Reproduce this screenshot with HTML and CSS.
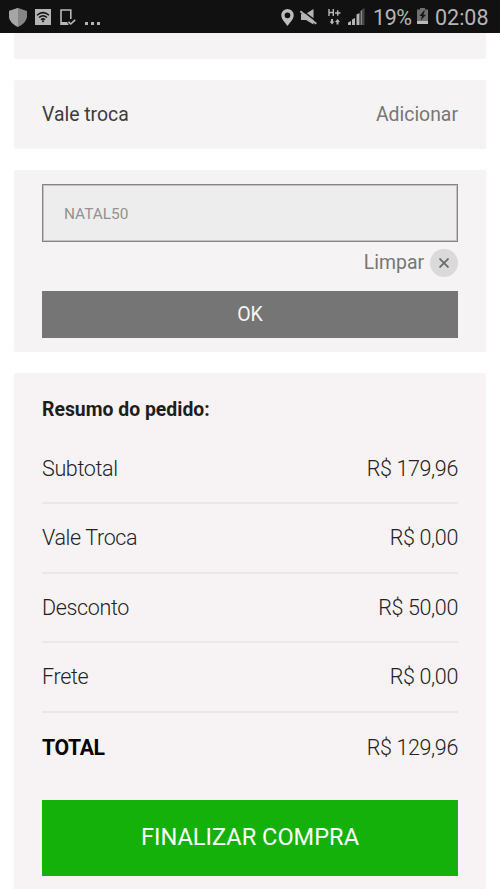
FILE: index.html
```html
<!DOCTYPE html>
<html lang="pt-BR">
<head>
<meta charset="utf-8">
<meta name="viewport" content="width=device-width, initial-scale=1">
<title>Resumo do pedido</title>
<link rel="stylesheet" href="styles.css">
</head>
<body>
<header class="status">
  <div class="status-left">
    <svg class="shield" width="18" height="19" viewBox="0 0 18 19"><path fill="#858585" d="M9 0 18 3V9Q17 15 9 19Q1 15 0 9V3Z"/><path fill="#a6a6a6" d="M9 0V19Q1 15 0 9V3Z"/></svg>
    <svg class="wifi" width="16" height="16" viewBox="0 0 16 16"><path fill="#b5b5b5" d="M0 0H16V16H0Z"/><path fill="none" stroke="#111" stroke-width="1.5" d="M2 6.2Q8 1 14 6.2M4 8.5Q8 5 12 8.5M6 10.7Q8 9 10 10.7"/><circle cx="8" cy="12.2" r="1" fill="#111"/></svg>
    <svg class="phone" width="16" height="17" viewBox="0 0 16 17"><path fill="none" stroke="#b8b8b8" stroke-width="1.6" d="M10.8 10V1H1V15.2H8.5M1 13.7H7.5M8.5 12.8 10.8 15 15.2 10.8"/></svg>
    <span class="dots"><i></i><i></i><i></i></span>
  </div>
  <div class="status-right">
    <svg class="pin" width="13" height="17" viewBox="0 0 13 17"><path fill="#bdbdbd" fill-rule="evenodd" d="M6.5 0A6.2 6.2 0 0 1 12.7 6.2C12.7 10 9.5 12.5 6.5 17C3.5 12.5.3 10 .3 6.2A6.2 6.2 0 0 1 6.5 0M6.5 3.4A2.9 2.9 0 1 0 6.5 9.2A2.9 2.9 0 1 0 6.5 3.4"/></svg>
    <svg class="mute" width="17" height="17" viewBox="0 0 17 17"><path fill="#b5b5b5" d="M1 4.8H6L13.5 0V15.5L6 11H1Z"/><path stroke="#111" stroke-width="1.5" d="M1.5 1 17 12.8"/><path stroke="#b5b5b5" stroke-width="1.8" d="M.3 2.3 16.3 14.8"/></svg>
    <svg class="network" width="13" height="16" viewBox="0 0 13 16"><path fill="none" stroke="#b8b8b8" stroke-width="1.4" d="M1 0V7M5.3 0V7M1 3.5H5.3M7 4H12.5M9.7 1.3V6.7"/><path fill="#b8b8b8" d="M3 10H5V12.5H6.5L4 15.5 1.5 12.5H3ZM8.5 15.5V13H7L9.5 10 12 13H10.5V15.5Z"/></svg>
    <svg class="signal" width="18" height="17" viewBox="0 0 18 17"><path fill="#b5b5b5" d="M1 14.5 4 13V17H1ZM5 11.5 8 10V17H5ZM9.5 6.5 12.5 5V17H9.5Z"/><path fill="#888" d="M13.5 3 15 2V17H13.5Z"/><path fill="#474747" d="M15 1.5 17.5 0V17H15Z"/></svg>
    <span class="percent">19%</span>
    <svg class="battery" width="11" height="16" viewBox="0 0 11 16"><path fill="#707070" d="M0 1.5H3V0H8V1.5H11V13H0Z"/><path fill="#bbb" d="M0 13H11V16H0Z"/><path fill="#151515" d="M7 2.5 2.5 8H5L3.7 12.5 9 6.7H6.3L8 2.5Z"/></svg>
    <time>02:08</time>
  </div>
</header>
<main>
  <div class="card previous"></div>
  <section class="card voucher"><span>Vale troca</span><a class="add">Adicionar</a></section>
  <section class="card coupon">
    <div class="code">NATAL50</div>
    <div class="clear"><span>Limpar</span><b><svg width="10" height="10" viewBox="0 0 10 10"><path d="M.5.5 9.5 9.5M9.5.5.5 9.5" stroke="#686868" stroke-width="1.7"/></svg></b></div>
    <div class="ok"><span>OK</span></div>
  </section>
  <section class="card summary">
    <h2><span>Resumo do pedido:</span></h2>
    <div class="row"><span>Subtotal</span><span>R$ 179,96</span></div>
    <div class="row"><span>Vale Troca</span><span>R$ 0,00</span></div>
    <div class="row"><span>Desconto</span><span>R$ 50,00</span></div>
    <div class="row"><span>Frete</span><span>R$ 0,00</span></div>
    <div class="row"><strong>TOTAL</strong><span>R$ 129,96</span></div>
    <div class="buy"><span>FINALIZAR COMPRA</span></div>
  </section>
</main>
</body>
</html>
```
FILE: styles.css
```css
* { box-sizing: border-box; }
html { overflow: hidden; }
body { margin: 0; height: 889px; overflow: hidden; background: #fff; font-family: Roboto, sans-serif; }
svg { display: block; flex: none; }
.status { height: 33px; background: #111; color: #b5b5b5; display: flex; justify-content: space-between; padding: 0 11px 0 9px; font-size: 21.5px; line-height: 35px; }
.status-left, .status-right { display: flex; align-items: flex-start; }
.shield { margin-top: 8px; }
.wifi { margin: 9px 0 0 8px; }
.phone { margin: 9px 0 0 9px; }
.dots { display: flex; gap: 3px; margin: 22px 0 0 9px; }
.dots i { width: 3px; height: 3px; background: #b5b5b5; }
.pin { margin-top: 9px; }
.mute { margin: 9px 0 0 6px; }
.network { margin: 9px 0 0 11px; }
.signal { margin: 8px 0 0 6px; }
.percent { width: 39px; margin-left: 8px; letter-spacing: -.4px; }
.battery { margin: 8px 0 0 5px; }
time { width: 54px; margin-left: 7px; }
main { padding: 0 14px; }
.card { background: #f6f3f4; border-radius: 2px; padding: 0 28px; }
.previous { height: 26px; border-radius: 0 0 2px 2px; }
.voucher { margin-top: 21px; height: 69px; display: flex; align-items: center; justify-content: space-between; color: #3c3c3c; font-size: 19.4px; }
.add { color: #777; }
.coupon { margin-top: 21px; height: 182px; padding-top: 14px; }
.code { height: 58px; border: 1px solid #858585; box-shadow: inset 0 0 0 1px #c3c2c2; background: #ededed; padding-left: 21px; color: #929292; font-size: 15.4px; line-height: 58px; }
.clear { height: 49px; padding-top: 7px; display: flex; justify-content: flex-end; gap: 6px; color: #777; font-size: 19.4px; line-height: 27px; }
.clear b { width: 28px; height: 28px; border-radius: 50%; background: #dadada; display: grid; place-items: center; }
.ok { height: 47px; background: #757575; color: #f5f5f5; font-size: 19.5px; line-height: 47px; text-align: center; }
.summary { margin-top: 21px; height: 540px; padding-top: 25px; background: #f7f3f5; }
h2 { margin: 0; height: 36.5px; color: #1d1d1d; font-size: 19.4px; font-weight: 700; line-height: 24px; }
.row { height: 69.5px; display: flex; justify-content: space-between; align-items: center; border-bottom: 2px solid #eae7e9; color: #222; font-size: 21.5px; font-weight: 300; letter-spacing: -.36px; }
.row:nth-of-type(5) { border-bottom: 0; }
.row strong { color: #050505; font-size: 21.2px; font-weight: 700; }
.buy { margin-top: 17.5px; height: 76px; background: #14b10b; color: #fff; font-size: 23.6px; line-height: 75px; text-align: center; }
```
